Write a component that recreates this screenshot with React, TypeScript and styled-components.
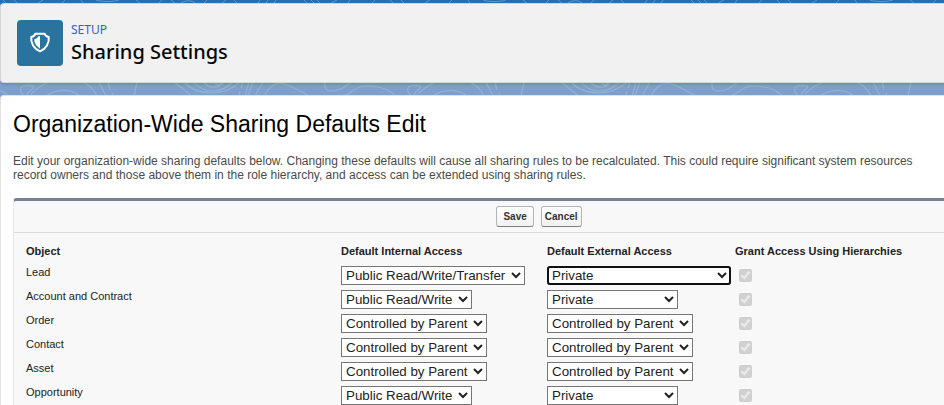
import React from "react";
import styled, { createGlobalStyle } from "styled-components";

const GlobalStyle = createGlobalStyle`
  body {
    margin: 0;
    overflow: hidden;
    font-family: "Liberation Sans", Arial, sans-serif;
    color: #222;
  }
  *, *::before, *::after { box-sizing: border-box; }
`;

const Page = styled.div`
  position: relative;
  padding-top: 3px;
  background: linear-gradient(#2a6cab 0, #2f70ae 4px, #7ca0cb 84px, #7ca0cb 100%);
`;

const Contours = styled.svg`
  position: absolute;
  inset: 0;
  width: 100%;
  height: 96px;
`;

const Header = styled.header`
  position: relative;
  display: flex;
  gap: 8px;
  padding: 16px;
  background: #f1f1f1;
  border: 1px solid #d8d6d4;
  border-right: 0;
  border-radius: 4px 0 0 4px;
  box-shadow: 0 2px 2px rgba(0, 0, 0, 0.1);
`;

const Tile = styled.div`
  display: grid;
  place-items: center;
  width: 46px;
  height: 46px;
  border-radius: 4px;
  background: #2a739e;
`;

const Eyebrow = styled.p`
  margin: 0;
  font: 12px/20px "Noto Sans", sans-serif;
  color: #2a66c8;
`;

const Title = styled.h1`
  margin: 0;
  font: 500 20px/24px "Noto Sans", sans-serif;
  color: #080707;
`;

const Main = styled.main`
  position: relative;
  margin-top: 12px;
  padding: 14px 0 0 12px;
  background: #fff;
  border: 1px solid #e2e2e2;
  border-right: 0;
  border-radius: 4px 0 0 0;
`;

const Heading = styled.h2`
  margin: 0;
  font-size: 23px;
  line-height: 28px;
  font-weight: 400;
  color: #000;
`;

const Intro = styled.p`
  margin: 16px 0;
  font-size: 12px;
  line-height: 14px;
  color: #4a4a4a;
  white-space: nowrap;
`;

const Panel = styled.form`
  border-top: 3px solid #777f9b;
  border-left: 1px solid #eaeaea;
  border-radius: 4px 0 0 0;
  background: #f8f8f8;
`;

const Actions = styled.div`
  display: flex;
  justify-content: center;
  gap: 7px;
  padding: 5px 0 5px 120px;
  border-bottom: 1px solid #dbdbdb;
`;

const Button = styled.button<{ $tight?: boolean }>`
  height: 21px;
  padding: 0 ${(p) => (p.$tight ? 3 : 6)}px;
  font: bold 10px "Liberation Sans", Arial, sans-serif;
  color: #333;
  border: 1px solid #b5b5b5;
  border-bottom-color: #7f7f7f;
  border-radius: 3px;
  background: linear-gradient(#fff, #f1f1f1);
`;

const Table = styled.table`
  width: 100%;
  table-layout: fixed;
  border-collapse: collapse;
  font-size: 11px;
  line-height: 13px;
`;

const Col = styled.col<{ $width?: number }>`
  width: ${(p) => (p.$width ? `${p.$width}px` : "auto")};
`;

const Head = styled.th`
  height: 31px;
  padding: 12px 0 6px;
  text-align: left;
  vertical-align: top;
  white-space: nowrap;

  &:first-child { padding-left: 12px; }
`;

const RowName = styled.th`
  height: 24px;
  padding: 2px 0 0 12px;
  text-align: left;
  font-weight: 400;
  vertical-align: top;
`;

const Cell = styled.td`
  height: 24px;
  padding: 2px 0 0;
  vertical-align: top;
`;

const Select = styled.select<{ $active?: boolean }>`
  display: block;
  height: 19px;
  padding-right: 2px;
  font-family: "Liberation Sans", Arial, sans-serif;
  color: #222;
  background: #fff;
  ${(p) =>
    p.$active &&
    `
    border-radius: 3px;
    outline: 2px solid #101010;
    outline-offset: -2px;
  `}
`;

const Check = styled.input`
  display: block;
`;

const RW = ["Private", "Public Read Only", "Public Read/Write"];
const RWT = [...RW, "Public Read/Write/Transfer"];
const PARENT = ["Controlled by Parent"];

type Row = { name: string; options: string[]; internal: string; external: string; active?: boolean };

const rows: Row[] = [
  { name: "Lead", options: RWT, internal: "Public Read/Write/Transfer", external: "Private", active: true },
  { name: "Account and Contract", options: RW, internal: "Public Read/Write", external: "Private" },
  { name: "Order", options: PARENT, internal: "Controlled by Parent", external: "Controlled by Parent" },
  { name: "Contact", options: PARENT, internal: "Controlled by Parent", external: "Controlled by Parent" },
  { name: "Asset", options: PARENT, internal: "Controlled by Parent", external: "Controlled by Parent" },
  { name: "Opportunity", options: RW, internal: "Public Read/Write", external: "Private" },
];

function Backdrop() {
  return (
    <Contours aria-hidden="true">
      <defs>
        <pattern id="contours" width="387" height="96" patternUnits="userSpaceOnUse">
          <g fill="none" stroke="#a6c1e0" strokeOpacity="0.5" strokeWidth="1.2">
            <path d="M25 96C19 92 19 86 26 85.500C33 85 36 86 31 90C28 92 27 94 27 96M31 94C39 86 46 83 52 81M46 96C56 89 70 88 80 96M82 82C88 84 94 90 97 96" />
            <path d="M99 82L106 96M108 82L110 90M112 93L113 96M137 82L134 96" />
            <path d="M174 82L192 96M184 82C196 96 224 97 240 82M194 82C203 94 222 94 232 82M203 82C210 89 218 89 224 82M214 83L218 85L222 83" />
            <path d="M243 82L241 88M240 91L239 96M249 82L245 96M253 82L248 96M263 82L255 96" />
            <path d="M264 96C270 84 278 80 290 86C298 90 304 93 309 96M325 82C324 92 330 92 338 90C346 88 347 83 354 81M342 96C352 95 354 86 365 86C380 86 390 90 394 96M0 90C4 92 7 94 8 96" />
          </g>
          <g fill="none" stroke="#a6c1e0" strokeOpacity="0.45" strokeWidth="1">
            <path d="M3 0L6 3M14 0L17 3M38 3L43 0M62 3L65 0M81 0L83 3M96 0C101 2 113 2 119 0M136 0L140 3M159 3L162 0M171 0L175 3M181 3C186 0 191 0 195 3M204 3L207 0" />
            <path d="M222 3L226 0M234 0L237 3M258 3L260 0M266 3L268 0M274 3L276 0M304 0L307 3M311 0L314 3M317 0L320 3M331 3L337 0M348 3L350 0M372 3L375 0" />
          </g>
        </pattern>
      </defs>
      <rect width="100%" height="96" fill="url(#contours)" />
    </Contours>
  );
}

function ShieldIcon() {
  return (
    <svg width="22" height="22" viewBox="57 54 66 66" aria-hidden="true">
      <path
        d="M76 59.500H104Q106 66 116 69C119 87 108 104 90 112C72 104 61 87 64 69Q74 66 76 59.500Z"
        fill="none"
        stroke="#fff"
        strokeWidth="6"
        strokeLinejoin="round"
      />
      <path d="M90 67V104C79 96 72 87 73 76Q82 74 85 67Z" fill="#fff" />
    </svg>
  );
}

function AccessSelect({ label, options, value, active }: { label: string; options: string[]; value: string; active?: boolean }) {
  return (
    <Select aria-label={label} defaultValue={value} $active={active}>
      {options.map((o) => (
        <option key={o}>{o}</option>
      ))}
    </Select>
  );
}

export default function App() {
  return (
    <Page>
      <GlobalStyle />
      <Backdrop />
      <Header>
        <Tile>
          <ShieldIcon />
        </Tile>
        <div>
          <Eyebrow>SETUP</Eyebrow>
          <Title>Sharing Settings</Title>
        </div>
      </Header>
      <Main>
        <Heading>Organization-Wide Sharing Defaults Edit</Heading>
        <Intro>
          Edit your organization-wide sharing defaults below. Changing these defaults will cause all sharing rules to be
          recalculated. This could require significant system resources
          <br />
          record owners and those above them in the role hierarchy, and access can be extended using sharing rules.
        </Intro>
        <Panel>
          <Actions>
            <Button type="button">Save</Button>
            <Button type="button" $tight>Cancel</Button>
          </Actions>
          <Table>
            <colgroup>
              <Col $width={327} />
              <Col $width={206} />
              <Col $width={188} />
              <Col />
            </colgroup>
            <thead>
              <tr>
                <Head scope="col">Object</Head>
                <Head scope="col">Default Internal Access</Head>
                <Head scope="col">Default External Access</Head>
                <Head scope="col">Grant Access Using Hierarchies</Head>
              </tr>
            </thead>
            <tbody>
              {rows.map((r) => (
                <tr key={r.name}>
                  <RowName scope="row">{r.name}</RowName>
                  <Cell>
                    <AccessSelect label={`${r.name} default internal access`} options={r.options} value={r.internal} />
                  </Cell>
                  <Cell>
                    <AccessSelect
                      label={`${r.name} default external access`}
                      options={r.options}
                      value={r.external}
                      active={r.active}
                    />
                  </Cell>
                  <Cell>
                    <Check type="checkbox" aria-label={`${r.name} grant access using hierarchies`} defaultChecked disabled />
                  </Cell>
                </tr>
              ))}
            </tbody>
          </Table>
        </Panel>
      </Main>
    </Page>
  );
}
